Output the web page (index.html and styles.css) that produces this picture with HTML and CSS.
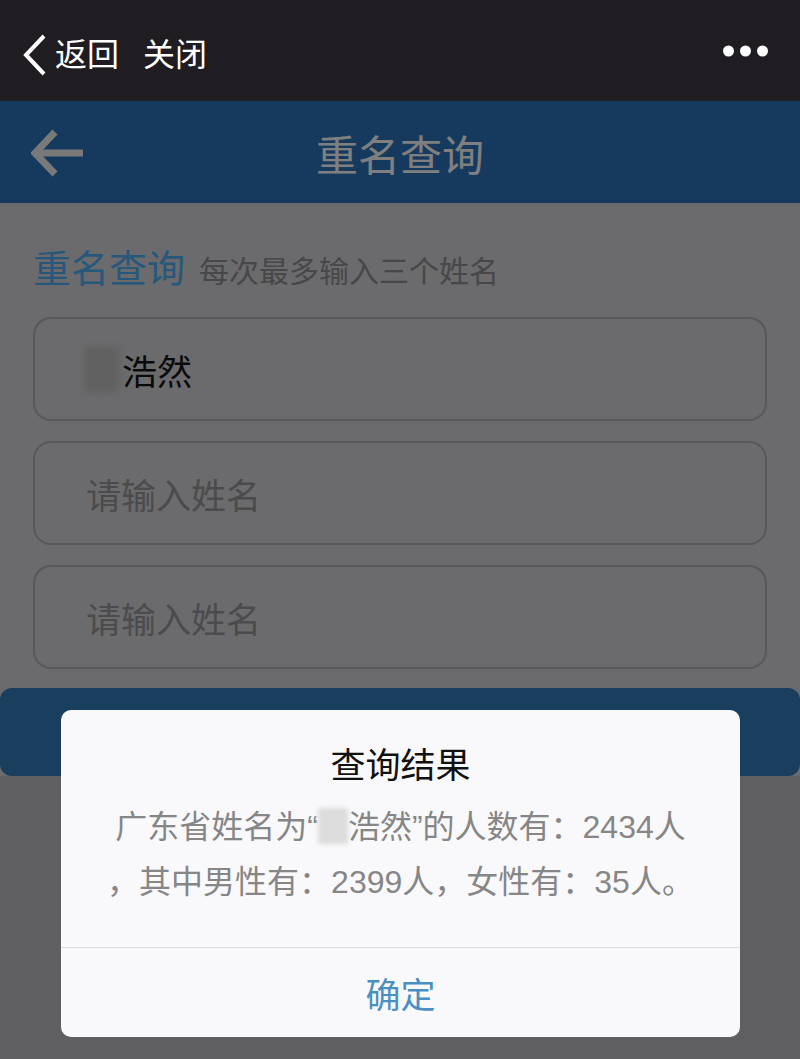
FILE: index.html
```html
<html>

<head>
    <meta charset="utf-8">
    <title>重名查询</title>
    <link rel="stylesheet" href="styles.css">
</head>

<body>
    <div class="wx-bar">
        <svg class="wx-back" width="24" height="42" viewBox="0 0 24 42">
            <polyline points="21,2 3,21 21,40" fill="none" stroke="#fff" stroke-width="4" />
        </svg>
        <span class="wx-link">返回</span>
        <span class="wx-link">关闭</span>
        <svg class="wx-more" width="46" height="12" viewBox="0 0 46 12" fill="#fff">
            <circle cx="5.5" cy="6" r="5.5" />
            <circle cx="22.5" cy="6" r="5.5" />
            <circle cx="39.5" cy="6" r="5.5" />
        </svg>
    </div>
    <div class="page">
        <div class="app-header">
            <svg class="app-back" width="54" height="48" viewBox="0 0 54 48">
                <polyline points="24,3 4,24 24,45" fill="none" stroke="#f2f2f2" stroke-width="7" />
                <line x1="6" y1="24" x2="52" y2="24" stroke="#f2f2f2" stroke-width="7" />
            </svg>
            <h1>重名查询</h1>
        </div>
        <div class="form">
            <div class="form-title">
                <span class="form-name">重名查询</span>
                <span class="form-hint">每次最多输入三个姓名</span>
            </div>
            <div class="field"><span class="masked"></span>浩然</div>
            <div class="field empty">请输入姓名</div>
            <div class="field empty">请输入姓名</div>
        </div>
        <div class="submit"></div>
        <div class="footer"></div>
        <div class="mask"></div>
        <div class="dialog">
            <div class="dialog-title">查询结果</div>
            <div class="dialog-text">广东省姓名为“<span class="masked-light"></span>浩然”的人数有：2434人<br>，其中男性有：2399人，女性有：35人。</div>
            <div class="dialog-btn">确定</div>
        </div>
    </div>
</body>

</html>
```

FILE: styles.css
```css
* {
    margin: 0;
    padding: 0;
    box-sizing: border-box;
}

body {
    width: 800px;
    height: 1059px;
    overflow: hidden;
    font-family: "Liberation Sans", "Noto Sans CJK SC", sans-serif;
    background: #1f1d21;
}

.wx-bar {
    height: 101px;
    padding: 8px 31px 0 23px;
    display: flex;
    align-items: center;
    background: #1f1d21;
    color: #fff;
}

.wx-back {
    margin-right: 8px;
}

.wx-link {
    font-size: 32px;
    line-height: 40px;
    margin-right: 24px;
}

.wx-more {
    margin-left: auto;
    margin-top: -8px;
}

.page {
    position: relative;
    height: 958px;
    display: flex;
    flex-direction: column;
    background: #d6d6da;
}

.app-header {
    position: relative;
    height: 102px;
    display: flex;
    align-items: center;
    justify-content: center;
    background: #2c74bd;
}

.app-back {
    position: absolute;
    left: 31px;
    top: 28px;
}

.app-header h1 {
    font-size: 42px;
    font-weight: normal;
    color: #fff;
}

.form {
    padding: 44px 33px 0;
    display: flex;
    flex-direction: column;
    gap: 20px;
}

.form-title {
    display: flex;
    align-items: baseline;
    line-height: 44px;
    margin-bottom: 3px;
}

.form-name {
    font-size: 38px;
    color: #4fb0f8;
}

.form-hint {
    font-size: 30px;
    margin-left: 14px;
    color: #8e8e92;
}

.field {
    height: 104px;
    border: 2px solid #b0b0b4;
    border-radius: 18px;
    padding-left: 49px;
    display: flex;
    align-items: center;
    font-size: 35px;
    color: #141414;
}

.field.empty {
    padding-left: 51px;
    color: #96969a;
}

.masked {
    display: inline-block;
    width: 35px;
    height: 45px;
    margin-right: 3px;
    border-radius: 4px;
    background: #c2c2c2;
    filter: blur(3px);
}

.submit {
    height: 88px;
    margin-top: 19px;
    border-radius: 12px;
    background: #347cbc;
}

.footer {
    flex: 1;
    background: #bebec2;
}

.mask {
    position: absolute;
    top: 0;
    left: 0;
    right: 0;
    bottom: 0;
    background: rgba(0, 0, 0, 0.5);
}

.dialog {
    position: absolute;
    top: 609px;
    left: 61px;
    width: 679px;
    height: 327px;
    border-radius: 10px;
    background: #f9f9fb;
    text-align: center;
    overflow: hidden;
}

.dialog-title {
    padding-top: 33px;
    font-size: 35px;
    line-height: 45px;
    color: #111;
}

.dialog-text {
    margin-top: 12px;
    padding-bottom: 37px;
    font-size: 32px;
    line-height: 55px;
    color: #868686;
}

.masked-light {
    display: inline-block;
    width: 30px;
    height: 36px;
    vertical-align: -6px;
    background: #dcdcdc;
    filter: blur(2px);
}

.dialog-btn {
    height: 89px;
    border-top: 1px solid #dcdcdc;
    display: flex;
    align-items: center;
    justify-content: center;
    font-size: 35px;
    color: #4a8fc2;
}
```
